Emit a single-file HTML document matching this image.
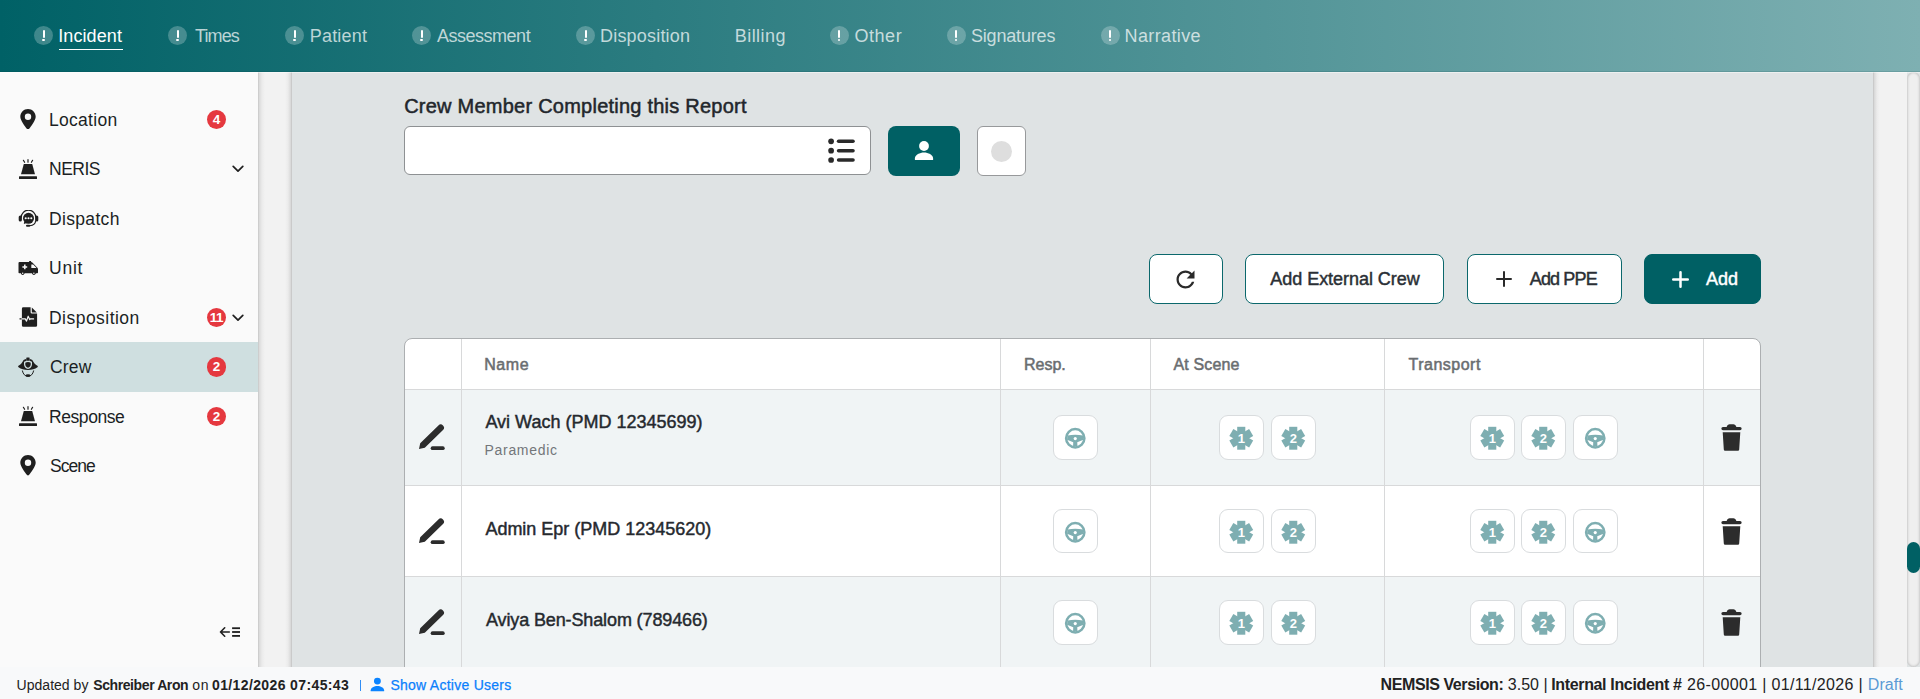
<!DOCTYPE html>
<html lang="en">
<head>
<meta charset="utf-8">
<title>Incident - Crew</title>
<style>
*{box-sizing:border-box;margin:0;padding:0}
html,body{width:1920px;height:699px;overflow:hidden;background:#dfe3e4}
body{position:relative;font-family:"Liberation Sans",Arial,sans-serif;color:#212529;-webkit-font-smoothing:antialiased}
.abs{position:absolute}
/* header */
#hdr{position:absolute;left:0;top:0;width:1920px;height:72px;background:linear-gradient(90deg,#006166 0%,#7eb0b2 100%);box-shadow:inset 0 -1px 0 rgba(0,60,64,.14),0 1px 0 rgba(255,255,255,.45);z-index:5}
.nav{position:absolute;top:0;height:72px;white-space:nowrap}
.nav .c{position:absolute;top:26px;width:19.200px;height:19.200px;border-radius:50%;background:rgba(255,255,255,.24)}
.nav .c:before{content:"";position:absolute;left:8.5px;top:4px;width:2px;height:7.5px;background:#fff;border-radius:1px}
.nav .c:after{content:"";position:absolute;left:8.4px;top:13px;width:2.2px;height:2.2px;background:#fff;border-radius:50%}
.nav .t{position:absolute;top:25px;font-size:18px;line-height:22px;color:rgba(255,255,255,.72)}
.nav.on .t{color:#fff}
.nav.on .u{position:absolute;top:48.600px;height:1.400px;background:#fff}
/* sidebar */
#side{position:absolute;left:0;top:72px;width:258px;height:595px;background:#fafafa}
.si{position:absolute;left:0;width:258px;height:49.5px}
.si.on{background:#cfdfe0;height:50.200px}
.si .tx{position:absolute;left:50px;top:14.500px;font-size:17.5px;line-height:22px;color:#1b1f24;white-space:nowrap}
.si svg.ic{position:absolute}
.badge{position:absolute;left:207px;top:15.700px;width:19.200px;height:19.200px;border-radius:50%;background:#e5383f;color:#fff;font-weight:700;font-size:13.500px;line-height:19.500px;text-align:center;letter-spacing:-.6px;text-indent:-.6px}
.chev{position:absolute;left:232px;top:21.500px}
/* gaps */
#gapL{position:absolute;left:258px;top:72px;width:34px;height:595px;background:linear-gradient(90deg,#c6c6c6 0,#dcdcdc 1.5px,#ebebeb 4px,#f2f2f2 7px,#f2f2f2 27px,#ebebeb 30px,#dadada 32.5px,#c2c2c2 34px)}
#gapR{position:absolute;left:1873px;top:72px;width:34px;height:595px;background:linear-gradient(90deg,#c2c2c2 0,#dadada 1.5px,#ebebeb 4px,#f2f2f2 7px,#f2f2f2 100%)}
#sb{position:absolute;left:1907px;top:72px;width:13px;height:595px;background:#efefef;border-radius:7px;box-shadow:inset 0 0 3px rgba(0,0,0,.3)}
#thumb{position:absolute;left:1907px;top:542px;width:13px;height:31px;border-radius:7px;background:#006064}
/* footer */
#ftr{position:absolute;left:0;top:667px;width:1920px;height:32px;background:#f8f9fa;z-index:4}
#ftr span{position:absolute;white-space:nowrap}
/* main */
#main{position:absolute;left:292px;top:72px;width:1581px;height:595px;background:#dfe3e4;overflow:hidden}
.btn{position:absolute;top:254px;height:50px;border:1px solid #0b686c;border-radius:8px;background:#fff}
.btn .bt{position:absolute;top:13px;font-size:18px;line-height:22px;font-weight:400;-webkit-text-stroke:.45px;color:#2a2f35;white-space:nowrap}
/* table */
#tbl{position:absolute;left:404px;top:338px;width:1357px;height:340px;border:1px solid #acafb1;border-radius:8px 8px 0 0;background:#fff;overflow:hidden}
.row{position:absolute;left:0;width:1355px}
.vl{position:absolute;top:0;width:1px;height:340px;background:#d8d9da}
.hl{position:absolute;left:0;width:1355px;height:1px;background:#d8d9da}
.th{position:absolute;top:16px;font-size:16px;line-height:20px;font-weight:400;-webkit-text-stroke:.52px;color:#6a6d70;white-space:nowrap}
.nm{position:absolute;left:80px;font-size:18px;line-height:22px;font-weight:400;-webkit-text-stroke:.45px;color:#25292e;white-space:nowrap}
.sub{position:absolute;left:80px;font-size:14px;line-height:18px;color:#73767a;white-space:nowrap}
.ib{position:absolute;width:44.5px;height:44.5px;border:1px solid #d9dcde;border-radius:9px;background:#fff}
.ib svg{position:absolute;left:0;top:0}
</style>
</head>
<body>
<div id="hdr">
<div class="nav on"><i class="c" style="left:34px"></i><span class="t" style="left:58.2px;letter-spacing:0.1px">Incident</span><i class="u" style="left:59px;width:64px"></i></div>
<div class="nav"><i class="c" style="left:168px"></i><span class="t" style="left:195.1px;letter-spacing:-0.9px">Times</span></div>
<div class="nav"><i class="c" style="left:285px"></i><span class="t" style="left:309.8px;letter-spacing:0.18px">Patient</span></div>
<div class="nav"><i class="c" style="left:412px"></i><span class="t" style="left:437.1px;letter-spacing:-0.5px">Assessment</span></div>
<div class="nav"><i class="c" style="left:576px"></i><span class="t" style="left:600px;letter-spacing:0.2px">Disposition</span></div>
<div class="nav"><span class="t" style="left:734.8px;letter-spacing:0.43px">Billing</span></div>
<div class="nav"><i class="c" style="left:829.8px"></i><span class="t" style="left:854.4px;letter-spacing:0.57px">Other</span></div>
<div class="nav"><i class="c" style="left:946.8px"></i><span class="t" style="left:970.9px;letter-spacing:-0.17px">Signatures</span></div>
<div class="nav"><i class="c" style="left:1100.8px"></i><span class="t" style="left:1124.6px;letter-spacing:0.37px">Narrative</span></div>
</div>
<div id="side">
<div class="si" style="top:22.25px"><svg class="ic" style="left:20px;top:14.5px" width="16" height="20.5" viewBox="0 0 384 512"><path fill="#1f1f1f" d="M215.700 499.200C267 435 384 279.400 384 192C384 86 298 0 192 0S0 86 0 192c0 87.400 117 243 168.300 307.200c12.300 15.300 35.100 15.300 47.400 0zM192 112a80 80 0 1 1 0 160 80 80 0 1 1 0-160z"/></svg><span class="tx" style="left:49px;letter-spacing:0.29px">Location</span><span class="badge">4</span></div>
<div class="si" style="top:71.75px"><svg class="ic" style="left:19px;top:15px" width="18" height="20.5" viewBox="0 0 18 20.5"><g fill="#1f1f1f"><path d="M4.800 5.100h8.400l2.800 10.100H2z"/><rect x="0" y="17.300" width="18" height="2.700" rx=".5"/></g><g stroke="#1f1f1f" stroke-width="1.200" stroke-linecap="round"><path d="M9 .7v2.500M4.400 1.300l1.200 2M13.600 1.300l-1.200 2"/></g></svg><span class="tx" style="left:49px;letter-spacing:-0.5px">NERIS</span><svg class="chev" width="12" height="8" viewBox="0 0 12 8"><path d="M1.200 1.300L6 6.100l4.800-4.800" fill="none" stroke="#1f1f1f" stroke-width="1.700" stroke-linecap="round" stroke-linejoin="round"/></svg></div>
<div class="si" style="top:121.25px"><svg class="ic" style="left:18px;top:17px" width="21" height="17" viewBox="0 0 21 17"><g fill="none" stroke="#1f1f1f"><path d="M3.200 7.500a7.300 7.300 0 0 1 14.600 0" stroke-width="1.300"/><path d="M17.600 10.500c0 3.300-2.500 5-6 5.200" stroke-width="1.100"/></g><g fill="#1f1f1f"><circle cx="10.500" cy="8.300" r="5.500"/><rect x=".700" y="5.400" width="3.200" height="6.200" rx="1.600"/><rect x="17.100" y="5.400" width="3.200" height="6.200" rx="1.600"/><path d="M6.300 11.500l-.5 2.600 3-1.200z"/><rect x="8" y="14.800" width="4.200" height="2" rx="1"/></g><g fill="#fafafa"><circle cx="7.700" cy="8.300" r="1.050"/><circle cx="10.500" cy="8.300" r="1.050"/><circle cx="13.300" cy="8.300" r="1.050"/></g></svg><span class="tx" style="left:49px;letter-spacing:0.33px">Dispatch</span></div>
<div class="si" style="top:170.75px"><svg class="ic" style="left:18px;top:17.500px" width="21" height="15" viewBox="0 0 21 15"><g fill="#1f1f1f"><rect x="11.100" y=".9" width="2" height="1.600" rx=".3"/><path d="M1.500 2.100h11.600c.6 0 1.100.2 1.500.7l4.800 4.900c.4.400.6.900.6 1.400v3.400a.8.800 0 0 1-.8.800H1.300a.8.800 0 0 1-.8-.8V3.100a1 1 0 0 1 1-1z"/><circle cx="4.700" cy="13.300" r="1.700"/><circle cx="15.900" cy="13.300" r="1.700"/></g><g fill="#fafafa"><path d="M13.300 4.600h1.900l3.400 3.400h-5.300z"/><rect x="6.050" y="4.500" width="1.500" height="4.800" rx=".2"/><rect x="4.400" y="6.150" width="4.800" height="1.500" rx=".2"/><circle cx="4.700" cy="13.300" r=".75"/><circle cx="15.900" cy="13.300" r=".75"/></g></svg><span class="tx" style="left:49px;letter-spacing:0.77px">Unit</span></div>
<div class="si" style="top:220.25px"><svg class="ic" style="left:19px;top:14.5px" width="18.5" height="20.5" viewBox="0 0 18.500 20.500"><g fill="#1f1f1f"><path d="M4.300.3h7.300v4.900a1.300 1.300 0 0 0 1.300 1.300h5.200v11.900a1.400 1.400 0 0 1-1.400 1.400H4.300a1.400 1.400 0 0 1-1.400-1.400V1.700A1.400 1.400 0 0 1 4.300.3z"/><path d="M12.800.6l5 5h-4.400a.6.600 0 0 1-.6-.6z"/><rect x=".4" y="11.350" width="2.700" height="1.100" rx=".4"/></g><path fill="none" stroke="#fafafa" stroke-width="1.150" stroke-linejoin="round" stroke-linecap="round" d="M2.900 11.900h3.400l1.200 2.200 1.700-4.900 1.500 3.400.6-.7h3.300"/></svg><span class="tx" style="left:49px;letter-spacing:0.47px">Disposition</span><span class="badge">11</span><svg class="chev" width="12" height="8" viewBox="0 0 12 8"><path d="M1.200 1.300L6 6.100l4.800-4.800" fill="none" stroke="#1f1f1f" stroke-width="1.700" stroke-linecap="round" stroke-linejoin="round"/></svg></div>
<div class="si on" style="top:269.75px"><svg class="ic" style="left:18px;top:15px" width="21" height="20.5" viewBox="0 0 21 20.5"><g fill="#1f1f1f"><rect x="8.300" y=".4" width="3.300" height="3.600" rx=".5"/><path d="M.5 8.800C2.700 7.500 4.300 5.500 5.600 2.900c1.100-.5 2-.8 2.700-.9v2h3.300v-2c.7.100 1.600.4 2.700.9 1.300 2.600 2.900 4.600 5.100 5.900.6.400.5 1 0 1.400-2.400 1.700-5.600 2.800-9.400 2.800s-7-1.100-9.400-2.800c-.5-.4-.7-1-.1-1.400z"/></g><path fill="#cfdfe0" d="M10 3.800c1.600 0 3 .5 4 1v2.700c0 2.300-1.700 3.900-4 4.600-2.300-.7-4-2.300-4-4.600V4.800c1-.5 2.400-1 4-1z"/><path fill="#1f1f1f" d="M10 5.100c1.100 0 2 .3 2.700.6v1.900c0 1.500-1.100 2.700-2.700 3.200-1.600-.5-2.700-1.700-2.700-3.200V5.700c.7-.3 1.600-.6 2.700-.6z"/><path fill="none" stroke="#1f1f1f" stroke-width="1" stroke-linecap="round" d="M4.400 13.900c.6 3.200 2.800 5.500 5.600 5.500s5-2.300 5.600-5.500"/><ellipse cx="10" cy="18.500" rx="2.400" ry="1.200" fill="#1f1f1f"/></svg><span class="tx" style="left:50px;letter-spacing:0.2px">Crew</span><span class="badge">2</span></div>
<div class="si" style="top:319.25px"><svg class="ic" style="left:19px;top:15px" width="18" height="20.5" viewBox="0 0 18 20.5"><g fill="#1f1f1f"><path d="M4.800 5.100h8.400l2.800 10.100H2z"/><rect x="0" y="17.300" width="18" height="2.700" rx=".5"/></g><g stroke="#1f1f1f" stroke-width="1.200" stroke-linecap="round"><path d="M9 .7v2.500M4.400 1.300l1.200 2M13.600 1.300l-1.200 2"/></g></svg><span class="tx" style="left:49px;letter-spacing:-0.43px">Response</span><span class="badge">2</span></div>
<div class="si" style="top:368.75px"><svg class="ic" style="left:20px;top:14.5px" width="16" height="20.5" viewBox="0 0 384 512"><path fill="#1f1f1f" d="M215.700 499.200C267 435 384 279.400 384 192C384 86 298 0 192 0S0 86 0 192c0 87.400 117 243 168.300 307.200c12.300 15.300 35.100 15.300 47.400 0zM192 112a80 80 0 1 1 0 160 80 80 0 1 1 0-160z"/></svg><span class="tx" style="left:50px;letter-spacing:-1.0px">Scene</span></div>
<svg class="abs" style="left:219px;top:554px" width="22" height="12" viewBox="0 0 22 12"><g fill="none" stroke="#1f1f1f" stroke-width="1.600" stroke-linecap="round" stroke-linejoin="round"><path d="M10.300 6H1.500M5.700 1.800L1.500 6l4.200 4.200"/></g><g fill="#1f1f1f"><rect x="13.100" y="1.300" width="7.900" height="1.800"/><rect x="13.100" y="5.100" width="7.900" height="1.800"/><rect x="13.100" y="9" width="7.900" height="1.800"/></g></svg>
</div>
<div id="gapL"></div>
<div id="main"></div>
<div class="abs" id="ttl" style="left:404.2px;top:93px;font-size:20px;line-height:26px;font-weight:400;-webkit-text-stroke:.5px;color:#22262b;white-space:nowrap;letter-spacing:0.236px">Crew Member Completing this Report</div>
<div class="abs" style="left:404px;top:126px;width:467px;height:49px;border:1px solid #8e9193;border-radius:6px;background:#fff"></div>
<svg class="abs" style="left:827px;top:137px" width="29" height="27" viewBox="0 0 29 27"><g fill="#2a2a2a"><circle cx="4.100" cy="4.300" r="2.850"/><circle cx="4.100" cy="13.700" r="2.850"/><circle cx="4.100" cy="23" r="2.850"/><rect x="9.800" y="2.500" width="18" height="3.600" rx="1.800"/><rect x="9.800" y="11.900" width="18" height="3.600" rx="1.800"/><rect x="9.800" y="21.200" width="18" height="3.600" rx="1.800"/></g></svg>
<div class="abs" style="left:888px;top:126px;width:72px;height:50px;border-radius:8px;background:#006064"></div>
<svg class="abs" style="left:914px;top:140px" width="20" height="21" viewBox="0 0 20 21"><g fill="#fff"><circle cx="10" cy="6" r="4.900"/><path d="M.9 20v-1.600c0-3.500 5-5.800 9.100-5.800s9.100 2.300 9.100 5.800V20z"/></g></svg>
<div class="abs" style="left:977px;top:126px;width:49px;height:49.500px;border:1px solid #97999b;border-radius:6px;background:#fff"></div>
<div class="abs" style="left:991px;top:140.900px;width:21px;height:21px;border-radius:50%;background:#dedede"></div>
<div class="btn" style="left:1149px;width:74px"><svg class="abs" style="left:22px;top:11px" width="27" height="27" viewBox="0 0 24 24"><path fill="#2a2a2a" d="M17.650 6.350C16.200 4.900 14.210 4 12 4c-4.420 0-7.990 3.580-7.990 8s3.570 8 7.990 8c3.730 0 6.840-2.550 7.730-6h-2.080c-.82 2.330-3.040 4-5.650 4-3.310 0-6-2.690-6-6s2.690-6 6-6c1.660 0 3.140.69 4.220 1.780L13 11h7V4l-2.350 2.350z"/></svg></div>
<div class="btn" style="left:1245px;width:199px"><span class="bt" id="b1" style="left:24.3px;letter-spacing:-0.038px">Add External Crew</span></div>
<div class="btn" style="left:1467px;width:155px"><svg class="abs" style="left:27.750px;top:16.450px" width="16" height="16" viewBox="0 0 16 16"><path d="M8 1v14M1 8h14" stroke="#2a2a2a" stroke-width="2" stroke-linecap="round"/></svg><span class="bt" id="b2" style="left:61.8px;letter-spacing:-0.867px">Add PPE</span></div>
<div class="btn" style="left:1644px;width:117px;background:#006064;border-color:#006064"><svg class="abs" style="left:26.850px;top:16.300px" width="17" height="17" viewBox="0 0 17 17"><path d="M8.500 1.250v14.500M1.250 8.500h14.500" stroke="#fff" stroke-width="2.500" stroke-linecap="round"/></svg><span class="bt" id="b3" style="left:61.0px;color:#fff;letter-spacing:-0.0px">Add</span></div>
<div id="tbl">
<div class="row" style="top:51px;height:95px;background:#f0f4f5"></div>
<div class="row" style="top:147px;height:90px;background:#fff"></div>
<div class="row" style="top:238px;height:103px;background:#f0f4f5"></div>
<i class="hl" style="top:50px"></i>
<i class="hl" style="top:146px"></i>
<i class="hl" style="top:237px"></i>
<i class="vl" style="left:56px"></i>
<i class="vl" style="left:595px"></i>
<i class="vl" style="left:745px"></i>
<i class="vl" style="left:979px"></i>
<i class="vl" style="left:1298px"></i>
<span class="th" id="th0" style="left:79.2px;letter-spacing:0.6px">Name</span>
<span class="th" id="th1" style="left:619.0px;letter-spacing:0.0px">Resp.</span>
<span class="th" id="th2" style="left:768.5px;letter-spacing:0.143px">At Scene</span>
<span class="th" id="th3" style="left:1003.5px;letter-spacing:0.5px">Transport</span>
<span class="nm" id="nm0" style="left:80.4px;top:72px;letter-spacing:0.0px">Avi Wach (PMD 12345699)</span>
<span class="sub" id="sub0" style="left:79.6px;top:101.5px;letter-spacing:0.675px">Paramedic</span>
<svg class="abs" style="left:13px;top:84.0px" width="28" height="28" viewBox="0 0 28 28"><g fill="#2c2c2c"><path d="M1 26L2.200 20.200L20.400 2.400A3.250 3.250 0 0 1 25 7L6.800 24.800z"/><rect x="12.700" y="23.300" width="14" height="3.700" rx="1.850"/></g></svg>
<svg class="abs" style="left:1316px;top:85.0px" width="21" height="27" viewBox="0 0 21 27"><g fill="#2c2c2c"><path d="M2 2.900h3.600C6.200 1.400 7.300.3 8.600.3h3.800c1.300 0 2.400 1.100 3 2.600H19a1.650 1.650 0 0 1 0 3.300H2a1.650 1.650 0 0 1 0-3.300z"/><path d="M1.700 8.200h17.600l-1.100 17.300a1.300 1.300 0 0 1-1.300 1.200H4.100a1.300 1.300 0 0 1-1.300-1.200z"/></g></svg>
<div class="ib" style="left:648px;top:76.25px"><svg width="44.5" height="44.5" viewBox="-22.250 -22.250 44.500 44.500" style="left:-.7px;top:0px"><g fill="#7eaeb1"><path fill-rule="evenodd" d="M0-10.400a10.400 10.400 0 1 0 0 20.800a10.400 10.400 0 1 0 0-20.800zM0-7.900a7.900 7.900 0 1 1 0 15.800a7.900 7.900 0 1 1 0-15.800z"/><path d="M-7.700-2.700Q0-4.400 7.700-2.700L8.200 1.600L2 4L2.200 8.200H-2.200L-2 4L-8.200 1.600z"/></g><circle cx="0" cy=".3" r="1.600" fill="#fff"/></svg></div>
<div class="ib" style="left:814px;top:76.25px"><svg width="44.5" height="44.5" viewBox="-22.250 -22.250 44.500 44.500" style="left:-.7px;top:0px"><g fill="#7eaeb1"><rect x="-4.050" y="-11.450" width="8.100" height="22.900"/><rect x="-4.050" y="-11.450" width="8.100" height="22.900" transform="rotate(60)"/><rect x="-4.050" y="-11.450" width="8.100" height="22.900" transform="rotate(120)"/></g><text x="0" y="4.600" text-anchor="middle" font-family="Liberation Sans, Arial, sans-serif" font-size="13" font-weight="700" fill="#fff">1</text></svg></div>
<div class="ib" style="left:866px;top:76.25px"><svg width="44.5" height="44.5" viewBox="-22.250 -22.250 44.500 44.500" style="left:-.7px;top:0px"><g fill="#7eaeb1"><rect x="-4.050" y="-11.450" width="8.100" height="22.900"/><rect x="-4.050" y="-11.450" width="8.100" height="22.900" transform="rotate(60)"/><rect x="-4.050" y="-11.450" width="8.100" height="22.900" transform="rotate(120)"/></g><text x="0" y="4.600" text-anchor="middle" font-family="Liberation Sans, Arial, sans-serif" font-size="13" font-weight="700" fill="#fff">2</text></svg></div>
<div class="ib" style="left:1065px;top:76.25px"><svg width="44.5" height="44.5" viewBox="-22.250 -22.250 44.500 44.500" style="left:-.7px;top:0px"><g fill="#7eaeb1"><rect x="-4.050" y="-11.450" width="8.100" height="22.900"/><rect x="-4.050" y="-11.450" width="8.100" height="22.900" transform="rotate(60)"/><rect x="-4.050" y="-11.450" width="8.100" height="22.900" transform="rotate(120)"/></g><text x="0" y="4.600" text-anchor="middle" font-family="Liberation Sans, Arial, sans-serif" font-size="13" font-weight="700" fill="#fff">1</text></svg></div>
<div class="ib" style="left:1116px;top:76.25px"><svg width="44.5" height="44.5" viewBox="-22.250 -22.250 44.500 44.500" style="left:-.7px;top:0px"><g fill="#7eaeb1"><rect x="-4.050" y="-11.450" width="8.100" height="22.900"/><rect x="-4.050" y="-11.450" width="8.100" height="22.900" transform="rotate(60)"/><rect x="-4.050" y="-11.450" width="8.100" height="22.900" transform="rotate(120)"/></g><text x="0" y="4.600" text-anchor="middle" font-family="Liberation Sans, Arial, sans-serif" font-size="13" font-weight="700" fill="#fff">2</text></svg></div>
<div class="ib" style="left:1168px;top:76.25px"><svg width="44.5" height="44.5" viewBox="-22.250 -22.250 44.500 44.500" style="left:-.7px;top:0px"><g fill="#7eaeb1"><path fill-rule="evenodd" d="M0-10.400a10.400 10.400 0 1 0 0 20.800a10.400 10.400 0 1 0 0-20.800zM0-7.900a7.900 7.900 0 1 1 0 15.800a7.900 7.900 0 1 1 0-15.800z"/><path d="M-7.700-2.700Q0-4.400 7.700-2.700L8.200 1.600L2 4L2.200 8.200H-2.200L-2 4L-8.200 1.600z"/></g><circle cx="0" cy=".3" r="1.600" fill="#fff"/></svg></div>
<span class="nm" id="nm1" style="left:80.4px;top:178.5px;letter-spacing:-0.009px">Admin Epr (PMD 12345620)</span>
<svg class="abs" style="left:13px;top:177.5px" width="28" height="28" viewBox="0 0 28 28"><g fill="#2c2c2c"><path d="M1 26L2.200 20.200L20.400 2.400A3.250 3.250 0 0 1 25 7L6.800 24.800z"/><rect x="12.700" y="23.300" width="14" height="3.700" rx="1.850"/></g></svg>
<svg class="abs" style="left:1316px;top:178.5px" width="21" height="27" viewBox="0 0 21 27"><g fill="#2c2c2c"><path d="M2 2.900h3.600C6.200 1.400 7.300.3 8.600.3h3.800c1.300 0 2.400 1.100 3 2.600H19a1.650 1.650 0 0 1 0 3.300H2a1.650 1.650 0 0 1 0-3.300z"/><path d="M1.700 8.200h17.600l-1.100 17.300a1.300 1.300 0 0 1-1.300 1.200H4.100a1.300 1.300 0 0 1-1.300-1.200z"/></g></svg>
<div class="ib" style="left:648px;top:169.75px"><svg width="44.5" height="44.5" viewBox="-22.250 -22.250 44.500 44.500" style="left:-.7px;top:0px"><g fill="#7eaeb1"><path fill-rule="evenodd" d="M0-10.400a10.400 10.400 0 1 0 0 20.800a10.400 10.400 0 1 0 0-20.800zM0-7.900a7.900 7.900 0 1 1 0 15.800a7.900 7.900 0 1 1 0-15.800z"/><path d="M-7.700-2.700Q0-4.400 7.700-2.700L8.200 1.600L2 4L2.200 8.200H-2.200L-2 4L-8.200 1.600z"/></g><circle cx="0" cy=".3" r="1.600" fill="#fff"/></svg></div>
<div class="ib" style="left:814px;top:169.75px"><svg width="44.5" height="44.5" viewBox="-22.250 -22.250 44.500 44.500" style="left:-.7px;top:0px"><g fill="#7eaeb1"><rect x="-4.050" y="-11.450" width="8.100" height="22.900"/><rect x="-4.050" y="-11.450" width="8.100" height="22.900" transform="rotate(60)"/><rect x="-4.050" y="-11.450" width="8.100" height="22.900" transform="rotate(120)"/></g><text x="0" y="4.600" text-anchor="middle" font-family="Liberation Sans, Arial, sans-serif" font-size="13" font-weight="700" fill="#fff">1</text></svg></div>
<div class="ib" style="left:866px;top:169.75px"><svg width="44.5" height="44.5" viewBox="-22.250 -22.250 44.500 44.500" style="left:-.7px;top:0px"><g fill="#7eaeb1"><rect x="-4.050" y="-11.450" width="8.100" height="22.900"/><rect x="-4.050" y="-11.450" width="8.100" height="22.900" transform="rotate(60)"/><rect x="-4.050" y="-11.450" width="8.100" height="22.900" transform="rotate(120)"/></g><text x="0" y="4.600" text-anchor="middle" font-family="Liberation Sans, Arial, sans-serif" font-size="13" font-weight="700" fill="#fff">2</text></svg></div>
<div class="ib" style="left:1065px;top:169.75px"><svg width="44.5" height="44.5" viewBox="-22.250 -22.250 44.500 44.500" style="left:-.7px;top:0px"><g fill="#7eaeb1"><rect x="-4.050" y="-11.450" width="8.100" height="22.900"/><rect x="-4.050" y="-11.450" width="8.100" height="22.900" transform="rotate(60)"/><rect x="-4.050" y="-11.450" width="8.100" height="22.900" transform="rotate(120)"/></g><text x="0" y="4.600" text-anchor="middle" font-family="Liberation Sans, Arial, sans-serif" font-size="13" font-weight="700" fill="#fff">1</text></svg></div>
<div class="ib" style="left:1116px;top:169.75px"><svg width="44.5" height="44.5" viewBox="-22.250 -22.250 44.500 44.500" style="left:-.7px;top:0px"><g fill="#7eaeb1"><rect x="-4.050" y="-11.450" width="8.100" height="22.900"/><rect x="-4.050" y="-11.450" width="8.100" height="22.900" transform="rotate(60)"/><rect x="-4.050" y="-11.450" width="8.100" height="22.900" transform="rotate(120)"/></g><text x="0" y="4.600" text-anchor="middle" font-family="Liberation Sans, Arial, sans-serif" font-size="13" font-weight="700" fill="#fff">2</text></svg></div>
<div class="ib" style="left:1168px;top:169.75px"><svg width="44.5" height="44.5" viewBox="-22.250 -22.250 44.500 44.500" style="left:-.7px;top:0px"><g fill="#7eaeb1"><path fill-rule="evenodd" d="M0-10.400a10.400 10.400 0 1 0 0 20.800a10.400 10.400 0 1 0 0-20.800zM0-7.900a7.900 7.900 0 1 1 0 15.800a7.900 7.900 0 1 1 0-15.800z"/><path d="M-7.700-2.700Q0-4.400 7.700-2.700L8.200 1.600L2 4L2.200 8.200H-2.200L-2 4L-8.200 1.600z"/></g><circle cx="0" cy=".3" r="1.600" fill="#fff"/></svg></div>
<span class="nm" id="nm2" style="left:81.0px;top:270.0px;letter-spacing:-0.125px">Aviya Ben-Shalom (789466)</span>
<svg class="abs" style="left:13px;top:269.0px" width="28" height="28" viewBox="0 0 28 28"><g fill="#2c2c2c"><path d="M1 26L2.200 20.200L20.400 2.400A3.250 3.250 0 0 1 25 7L6.800 24.800z"/><rect x="12.700" y="23.300" width="14" height="3.700" rx="1.850"/></g></svg>
<svg class="abs" style="left:1316px;top:270.0px" width="21" height="27" viewBox="0 0 21 27"><g fill="#2c2c2c"><path d="M2 2.900h3.600C6.200 1.400 7.300.3 8.600.3h3.800c1.300 0 2.400 1.100 3 2.600H19a1.650 1.650 0 0 1 0 3.300H2a1.650 1.650 0 0 1 0-3.300z"/><path d="M1.700 8.200h17.600l-1.100 17.300a1.300 1.300 0 0 1-1.300 1.200H4.100a1.300 1.300 0 0 1-1.300-1.200z"/></g></svg>
<div class="ib" style="left:648px;top:261.25px"><svg width="44.5" height="44.5" viewBox="-22.250 -22.250 44.500 44.500" style="left:-.7px;top:0px"><g fill="#7eaeb1"><path fill-rule="evenodd" d="M0-10.400a10.400 10.400 0 1 0 0 20.800a10.400 10.400 0 1 0 0-20.800zM0-7.900a7.900 7.900 0 1 1 0 15.800a7.900 7.900 0 1 1 0-15.800z"/><path d="M-7.700-2.700Q0-4.400 7.700-2.700L8.200 1.600L2 4L2.200 8.200H-2.200L-2 4L-8.200 1.600z"/></g><circle cx="0" cy=".3" r="1.600" fill="#fff"/></svg></div>
<div class="ib" style="left:814px;top:261.25px"><svg width="44.5" height="44.5" viewBox="-22.250 -22.250 44.500 44.500" style="left:-.7px;top:0px"><g fill="#7eaeb1"><rect x="-4.050" y="-11.450" width="8.100" height="22.900"/><rect x="-4.050" y="-11.450" width="8.100" height="22.900" transform="rotate(60)"/><rect x="-4.050" y="-11.450" width="8.100" height="22.900" transform="rotate(120)"/></g><text x="0" y="4.600" text-anchor="middle" font-family="Liberation Sans, Arial, sans-serif" font-size="13" font-weight="700" fill="#fff">1</text></svg></div>
<div class="ib" style="left:866px;top:261.25px"><svg width="44.5" height="44.5" viewBox="-22.250 -22.250 44.500 44.500" style="left:-.7px;top:0px"><g fill="#7eaeb1"><rect x="-4.050" y="-11.450" width="8.100" height="22.900"/><rect x="-4.050" y="-11.450" width="8.100" height="22.900" transform="rotate(60)"/><rect x="-4.050" y="-11.450" width="8.100" height="22.900" transform="rotate(120)"/></g><text x="0" y="4.600" text-anchor="middle" font-family="Liberation Sans, Arial, sans-serif" font-size="13" font-weight="700" fill="#fff">2</text></svg></div>
<div class="ib" style="left:1065px;top:261.25px"><svg width="44.5" height="44.5" viewBox="-22.250 -22.250 44.500 44.500" style="left:-.7px;top:0px"><g fill="#7eaeb1"><rect x="-4.050" y="-11.450" width="8.100" height="22.900"/><rect x="-4.050" y="-11.450" width="8.100" height="22.900" transform="rotate(60)"/><rect x="-4.050" y="-11.450" width="8.100" height="22.900" transform="rotate(120)"/></g><text x="0" y="4.600" text-anchor="middle" font-family="Liberation Sans, Arial, sans-serif" font-size="13" font-weight="700" fill="#fff">1</text></svg></div>
<div class="ib" style="left:1116px;top:261.25px"><svg width="44.5" height="44.5" viewBox="-22.250 -22.250 44.500 44.500" style="left:-.7px;top:0px"><g fill="#7eaeb1"><rect x="-4.050" y="-11.450" width="8.100" height="22.900"/><rect x="-4.050" y="-11.450" width="8.100" height="22.900" transform="rotate(60)"/><rect x="-4.050" y="-11.450" width="8.100" height="22.900" transform="rotate(120)"/></g><text x="0" y="4.600" text-anchor="middle" font-family="Liberation Sans, Arial, sans-serif" font-size="13" font-weight="700" fill="#fff">2</text></svg></div>
<div class="ib" style="left:1168px;top:261.25px"><svg width="44.5" height="44.5" viewBox="-22.250 -22.250 44.500 44.500" style="left:-.7px;top:0px"><g fill="#7eaeb1"><path fill-rule="evenodd" d="M0-10.400a10.400 10.400 0 1 0 0 20.800a10.400 10.400 0 1 0 0-20.800zM0-7.900a7.900 7.900 0 1 1 0 15.800a7.900 7.900 0 1 1 0-15.800z"/><path d="M-7.700-2.700Q0-4.400 7.700-2.700L8.200 1.600L2 4L2.200 8.200H-2.200L-2 4L-8.200 1.600z"/></g><circle cx="0" cy=".3" r="1.600" fill="#fff"/></svg></div>
</div>
<div id="gapR"></div>
<div id="sb"></div><div id="thumb"></div>
<div id="ftr">
<span id="f1a" style="left:16.6px;letter-spacing:0.022px;top:9.500px;font-size:14px;line-height:16px;color:#222">Updated by</span>
<span id="f1b" style="left:93.2px;letter-spacing:-0.4px;top:9.500px;font-size:14px;line-height:16px;color:#222;font-weight:700">Schreiber Aron</span>
<span id="f1c" style="left:192.2px;letter-spacing:0.8px;top:9.500px;font-size:14px;line-height:16px;color:#222">on</span>
<span id="f1d" style="left:212.0px;letter-spacing:0.378px;top:9.500px;font-size:14px;line-height:16px;color:#222;font-weight:700">01/12/2026 07:45:43</span>
<i class="abs" style="left:359.500px;top:12.500px;width:1.500px;height:11.500px;background:#2f8df5"></i>
<svg class="abs" style="left:369px;top:9px" width="17" height="17" viewBox="0 0 17 17"><g fill="#0b84ff"><circle cx="8.400" cy="5.100" r="3.450"/><path d="M1.700 15.200v-.9c0-2.800 3.600-4.400 6.700-4.400s6.700 1.600 6.700 4.400v.9z"/></g></svg>
<span id="f2" style="-webkit-text-stroke:.25px;left:390.4px;letter-spacing:0.262px;top:9.500px;font-size:14px;line-height:16px;color:#0b80fc">Show Active Users</span>
<span id="f3a" style="left:1380.6px;letter-spacing:-0.414px;top:9px;font-size:16px;line-height:18px;color:#222;font-weight:700">NEMSIS Version:</span>
<span id="f3b" style="left:1507.8px;letter-spacing:0.0px;top:9px;font-size:16px;line-height:18px;color:#222">3.50 |</span>
<span id="f3c" style="left:1551.2px;letter-spacing:-0.344px;top:9px;font-size:16px;line-height:18px;color:#222;font-weight:700">Internal Incident #</span>
<span id="f3d" style="left:1687.0px;letter-spacing:0.345px;top:9px;font-size:16px;line-height:18px;color:#222">26-00001 | 01/11/2026 |</span>
<span id="f3e" style="left:1867.8px;letter-spacing:0.05px;top:9px;font-size:16px;line-height:18px;color:#222;color:#5b9bd5">Draft</span>
</div>
</body>
</html>
